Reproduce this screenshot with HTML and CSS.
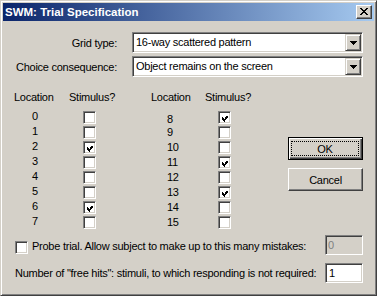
FILE: index.html
```html
<!DOCTYPE html>
<html>
<head>
<meta charset="utf-8">
<link rel="stylesheet" href="styles.css">
</head>
<body>
<div class="window">
  <div class="titlebar">
    <span class="title">SWM: Trial Specification</span>
    <span class="close-btn">
      <svg width="8" height="7" viewBox="0 0 8 7" shape-rendering="crispEdges"><g fill="#000"><rect x="0" y="0" width="2" height="1"/><rect x="6" y="0" width="2" height="1"/><rect x="1" y="1" width="2" height="1"/><rect x="5" y="1" width="2" height="1"/><rect x="2" y="2" width="4" height="1"/><rect x="3" y="3" width="2" height="1"/><rect x="2" y="4" width="4" height="1"/><rect x="1" y="5" width="2" height="1"/><rect x="5" y="5" width="2" height="1"/><rect x="0" y="6" width="2" height="1"/><rect x="6" y="6" width="2" height="1"/></g></svg>
    </span>
  </div>
  <div class="client">
    <div class="field-row">
      <span class="field-label">Grid type:</span>
      <div class="combo"><span class="combo-text">16-way scattered pattern</span><span class="combo-btn"><svg width="7" height="4" viewBox="0 0 7 4" shape-rendering="crispEdges"><g fill="#000"><rect x="0" y="0" width="7" height="1"/><rect x="1" y="1" width="5" height="1"/><rect x="2" y="2" width="3" height="1"/><rect x="3" y="3" width="1" height="1"/></g></svg></span></div>
    </div>
    <div class="field-row second">
      <span class="field-label">Choice consequence:</span>
      <div class="combo"><span class="combo-text">Object remains on the screen</span><span class="combo-btn"><svg width="7" height="4" viewBox="0 0 7 4" shape-rendering="crispEdges"><g fill="#000"><rect x="0" y="0" width="7" height="1"/><rect x="1" y="1" width="5" height="1"/><rect x="2" y="2" width="3" height="1"/><rect x="3" y="3" width="1" height="1"/></g></svg></span></div>
    </div>
    <div class="middle">
      <div class="locgrid">
        <span class="hdr">Location</span><span class="hdr">Stimulus?</span><span class="hdr">Location</span><span class="hdr">Stimulus?</span>

        <span class="num">0</span><span class="cell cell-l"><span class="chk"></span></span><span class="num num-r first">8</span><span class="cell cell-r"><span class="chk"><svg class="tick" width="7" height="7" viewBox="0 0 7 7" shape-rendering="crispEdges"><g fill="#000"><rect x="0" y="2" width="1" height="3"/><rect x="1" y="3" width="1" height="3"/><rect x="2" y="4" width="1" height="3"/><rect x="3" y="3" width="1" height="3"/><rect x="4" y="2" width="1" height="3"/><rect x="5" y="1" width="1" height="3"/><rect x="6" y="0" width="1" height="3"/></g></svg></span></span>

        <span class="num">1</span><span class="cell cell-l"><span class="chk"></span></span><span class="num num-r">9</span><span class="cell cell-r"><span class="chk"></span></span>

        <span class="num">2</span><span class="cell cell-l"><span class="chk"><svg class="tick" width="7" height="7" viewBox="0 0 7 7" shape-rendering="crispEdges"><g fill="#000"><rect x="0" y="2" width="1" height="3"/><rect x="1" y="3" width="1" height="3"/><rect x="2" y="4" width="1" height="3"/><rect x="3" y="3" width="1" height="3"/><rect x="4" y="2" width="1" height="3"/><rect x="5" y="1" width="1" height="3"/><rect x="6" y="0" width="1" height="3"/></g></svg></span></span><span class="num num-r">10</span><span class="cell cell-r"><span class="chk"></span></span>

        <span class="num">3</span><span class="cell cell-l"><span class="chk"></span></span><span class="num num-r">11</span><span class="cell cell-r"><span class="chk"><svg class="tick" width="7" height="7" viewBox="0 0 7 7" shape-rendering="crispEdges"><g fill="#000"><rect x="0" y="2" width="1" height="3"/><rect x="1" y="3" width="1" height="3"/><rect x="2" y="4" width="1" height="3"/><rect x="3" y="3" width="1" height="3"/><rect x="4" y="2" width="1" height="3"/><rect x="5" y="1" width="1" height="3"/><rect x="6" y="0" width="1" height="3"/></g></svg></span></span>

        <span class="num">4</span><span class="cell cell-l"><span class="chk"></span></span><span class="num num-r">12</span><span class="cell cell-r"><span class="chk"></span></span>

        <span class="num">5</span><span class="cell cell-l"><span class="chk"></span></span><span class="num num-r">13</span><span class="cell cell-r"><span class="chk"><svg class="tick" width="7" height="7" viewBox="0 0 7 7" shape-rendering="crispEdges"><g fill="#000"><rect x="0" y="2" width="1" height="3"/><rect x="1" y="3" width="1" height="3"/><rect x="2" y="4" width="1" height="3"/><rect x="3" y="3" width="1" height="3"/><rect x="4" y="2" width="1" height="3"/><rect x="5" y="1" width="1" height="3"/><rect x="6" y="0" width="1" height="3"/></g></svg></span></span>

        <span class="num">6</span><span class="cell cell-l"><span class="chk"><svg class="tick" width="7" height="7" viewBox="0 0 7 7" shape-rendering="crispEdges"><g fill="#000"><rect x="0" y="2" width="1" height="3"/><rect x="1" y="3" width="1" height="3"/><rect x="2" y="4" width="1" height="3"/><rect x="3" y="3" width="1" height="3"/><rect x="4" y="2" width="1" height="3"/><rect x="5" y="1" width="1" height="3"/><rect x="6" y="0" width="1" height="3"/></g></svg></span></span><span class="num num-r">14</span><span class="cell cell-r"><span class="chk"></span></span>

        <span class="num">7</span><span class="cell cell-l"><span class="chk"></span></span><span class="num num-r">15</span><span class="cell cell-r"><span class="chk"></span></span>
      </div>
      <div class="buttons">
        <div class="btn btn-default"><span class="focus">OK</span></div>
        <div class="btn">Cancel</div>
      </div>
    </div>
    <div class="probe-row">
      <span class="chk probe-chk"></span>
      <span class="probe-text">Probe trial. Allow subject to make up to this many mistakes:</span>
      <span class="edit disabled">0</span>
    </div>
    <div class="free-row">
      <span class="free-text">Number of "free hits": stimuli, to which responding is not required:</span>
      <span class="edit">1</span>
    </div>
  </div>
</div>
</body>
</html>
```

FILE: styles.css
```css
* { box-sizing: border-box; }
html, body { margin: 0; padding: 0; }
body {
  width: 377px;
  height: 296px;
  overflow: hidden;
  background: #D4D0C8;
  font-family: "Liberation Sans", Arial, sans-serif;
  font-size: 11px;
  letter-spacing: -0.25px;
  color: #000;
}
.window {
  width: 377px;
  height: 296px;
  border: 1px solid;
  border-color: #D4D0C8 #404040 #404040 #D4D0C8;
  box-shadow: inset 1px 1px 0 #FFFFFF, inset -1px -1px 0 #808080;
  padding: 2px;
  background: #D4D0C8;
  display: flex;
  flex-direction: column;
}
.titlebar {
  height: 18px;
  flex: none;
  display: flex;
  align-items: center;
  padding-left: 2px;
  background: linear-gradient(to right, #0A246A, #A6CAF0);
}
.title {
  color: #FFFFFF;
  font-weight: bold;
  font-size: 11.5px;
  letter-spacing: 0;
  line-height: 18px;
  white-space: nowrap;
}
.close-btn {
  margin-left: auto;
  margin-right: 2px;
  width: 16px;
  height: 14px;
  background: #D4D0C8;
  border: 1px solid;
  border-color: #FFFFFF #404040 #404040 #FFFFFF;
  box-shadow: inset -1px -1px 0 #808080;
  display: flex;
  align-items: flex-start;
  justify-content: flex-start;
  padding: 2px 0 0 3px;
}
.close-btn svg { display: block; }
.client {
  flex: 1;
  padding-top: 11px;
  display: flex;
  flex-direction: column;
}
.field-row {
  display: flex;
  align-items: center;
  height: 21px;
}
.field-row.second { margin-top: 3px; }
.field-label {
  width: 114px;
  text-align: right;
  white-space: nowrap;
}
.combo {
  margin-left: 15px;
  width: 231px;
  height: 21px;
  background: #FFFFFF;
  border: 1px solid;
  border-color: #808080 #FFFFFF #FFFFFF #808080;
  box-shadow: inset 1px 1px 0 #404040, inset -1px -1px 0 #D4D0C8;
  padding: 1px;
  display: flex;
  align-items: stretch;
}
.combo-text {
  flex: 1;
  padding-left: 2px;
  line-height: 17px;
  white-space: nowrap;
}
.combo-btn {
  width: 16px;
  background: #D4D0C8;
  border: 1px solid;
  border-color: #D4D0C8 #404040 #404040 #D4D0C8;
  box-shadow: inset 1px 1px 0 #FFFFFF, inset -1px -1px 0 #808080;
  display: flex;
  align-items: center;
  justify-content: center;
}
.combo-btn svg { display: block; }
.middle {
  margin-top: 14px;
  display: flex;
  align-items: flex-start;
}
.locgrid {
  margin-left: 11px;
  display: grid;
  grid-template-columns: 55px 82px 54px 60px;
  grid-template-rows: 20px repeat(8, 15px);
}
.hdr {
  line-height: 13px;
  white-space: nowrap;
}
.num {
  padding-left: 18px;
  line-height: 11px;
}
.num-r { padding-left: 16px; padding-top: 1px; }
.num-r.first { padding-top: 3px; }
.cell-l { padding-left: 14px; }
.cell-r { padding-left: 13px; }
.chk {
  width: 13px;
  height: 13px;
  display: flex;
  padding: 2px;
  background: #FFFFFF;
  border: 1px solid;
  border-color: #808080 #FFFFFF #FFFFFF #808080;
  box-shadow: inset 1px 1px 0 #404040, inset -1px -1px 0 #D4D0C8;
}
.tick { display: block; margin: 1px 0 0 1px; }
.buttons {
  margin-left: auto;
  margin-right: 11px;
  width: 75px;
  padding-top: 46px;
  display: flex;
  flex-direction: column;
  gap: 8px;
}
.btn {
  height: 23px;
  background: #D4D0C8;
  border: 1px solid;
  border-color: #FFFFFF #404040 #404040 #FFFFFF;
  box-shadow: inset -1px -1px 0 #808080;
  display: flex;
  align-items: center;
  justify-content: center;
}
.btn-default {
  border-color: #000000;
  box-shadow: inset 1px 1px 0 #FFFFFF, inset -1px -1px 0 #404040, inset -2px -2px 0 #808080;
  align-items: stretch;
  justify-content: stretch;
}
.focus {
  flex: 1;
  margin: 3px 3px 3px 2px;
  border: 1px dotted #000000;
  display: flex;
  align-items: center;
  justify-content: center;
}
.probe-row {
  margin-top: 4px;
  height: 20px;
  display: flex;
  align-items: center;
  padding-left: 12px;
  padding-right: 11px;
}
.probe-chk { margin-top: 4px; }
.probe-text { margin-left: 4px; white-space: nowrap; margin-top: 2px; }
.edit {
  margin-left: auto;
  width: 38px;
  height: 20px;
  background: #FFFFFF;
  border: 1px solid;
  border-color: #808080 #FFFFFF #FFFFFF #808080;
  box-shadow: inset 1px 1px 0 #404040, inset -1px -1px 0 #D4D0C8;
  padding: 1px 0 0 3px;
  line-height: 16px;
}
.edit.disabled {
  background: #D4D0C8;
  color: #808080;
  padding-left: 2px;
}
.free-row {
  margin-top: 8px;
  height: 20px;
  display: flex;
  align-items: center;
  padding-left: 12px;
  padding-right: 11px;
}
.free-text { white-space: nowrap; }
```
